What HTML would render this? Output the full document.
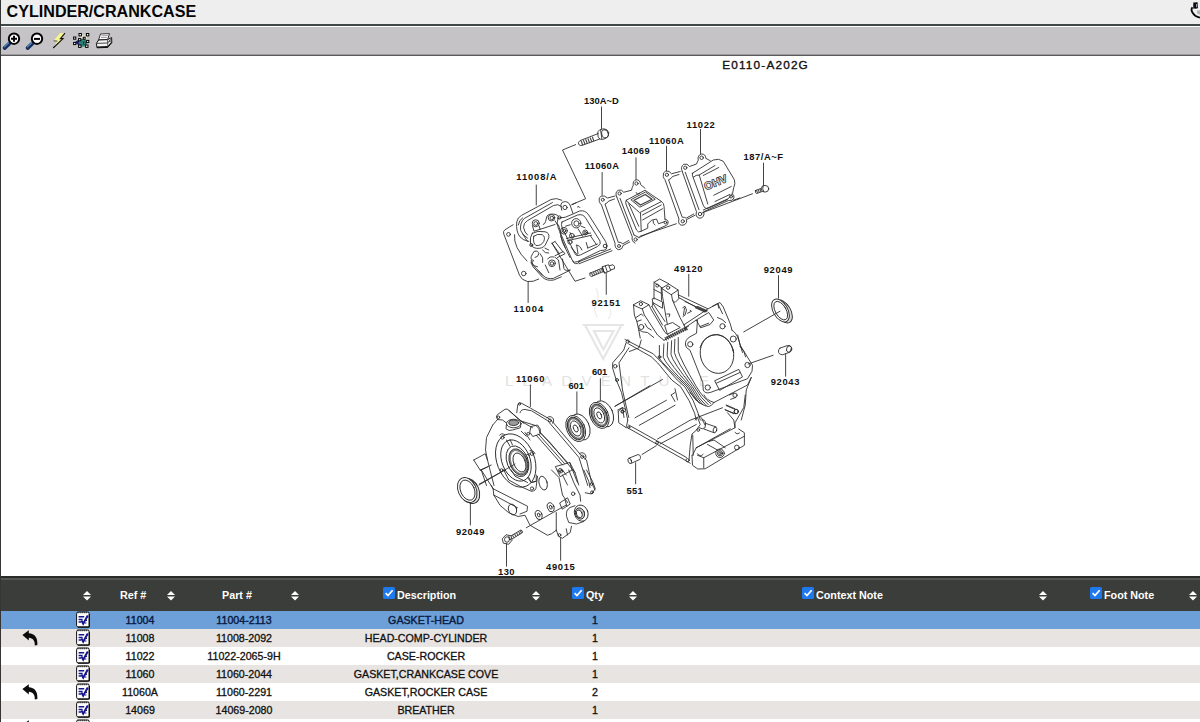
<!DOCTYPE html>
<html><head><meta charset="utf-8"><title>CYLINDER/CRANKCASE</title>
<style>
html,body{margin:0;padding:0;}
body{width:1200px;height:722px;overflow:hidden;background:#fff;position:relative;font-family:"Liberation Sans",Arial,sans-serif;color:#000;}
#title{position:absolute;left:0;top:0;width:1200px;height:24px;background:#eeeeee;}
#title span{position:absolute;left:6.6px;top:2px;font-size:16.1px;font-weight:bold;line-height:19px;white-space:nowrap;color:#050505;}
#l1{position:absolute;left:0;top:24px;width:1200px;height:2px;background:#404747;}
#tb{position:absolute;left:0;top:27px;width:1200px;height:27px;background:#c5c3c5;}
#l2{position:absolute;left:0;top:54px;width:1200px;height:2px;background:linear-gradient(#9c9a9c 0,#9c9a9c 50%,#585a5a 50%,#585a5a 100%);}
#lb{position:absolute;left:0;top:0;width:1px;height:722px;background:#353535;z-index:5;}
#th{position:absolute;left:0;top:576px;width:1200px;height:35px;background:#3b3d3b;}
#th0{position:absolute;left:0;top:576px;width:1200px;height:2px;background:#2b2b2b;}
#th1{position:absolute;left:0;top:578px;width:1200px;height:2px;background:#555755;}
.h{position:absolute;top:588px;font-size:10.75px;font-weight:bold;color:#fff;white-space:nowrap;line-height:14px;}
.row{position:absolute;left:0;width:1200px;height:18px;}
.c{position:absolute;top:0;font-size:10.67px;line-height:18px;white-space:nowrap;transform:translateX(-50%);color:#101010;-webkit-text-stroke:0.3px #101010;}
.sel .c{color:#0a1a42;-webkit-text-stroke:0.4px #0a1a42;}
.sa{position:absolute;top:591px;width:8px;height:10px;}
.cb{position:absolute;top:587px;width:12px;height:12px;}
.ic{position:absolute;top:0px;left:76px;width:14px;height:17px;}
.bk{position:absolute;top:1px;left:21.5px;width:17px;height:16px;}
#dg{position:absolute;left:0;top:0;width:1200px;height:722px;}
#dg text{font-family:"Liberation Sans",Arial,sans-serif;font-size:9.4px;fill:#111;}
</style></head><body>
<div id="title"><span>CYLINDER/CRANKCASE</span></div>
<div id="l1"></div><div id="tb"></div><div id="l2"></div><div id="lb"></div>
<svg id="dg" viewBox="0 0 1200 722" fill="none" stroke="#2a2a2a" stroke-width="0.9" stroke-linecap="round" stroke-linejoin="round">
<!-- watermark -->
<g stroke="#e6e6e6" stroke-width="2.2" stroke-linejoin="miter" stroke-linecap="butt">
<path d="M582.5 325H624M585 325L603.2 359L621.5 325M594 331H613.5L603.4 349.5Z"/>
<path d="M596 288Q599 294 597.5 301Q592 309 597.5 318M610 309Q612 314 608.5 319" stroke-width="1.4" stroke="#eeeeee"/>
</g>
<text x="505" y="385.6" textLength="204" lengthAdjust="spacing" stroke="none" style="font-size:15.2px;fill:#e2e2e2">LEADVENTURE</text>
<!-- cylinder head + head gasket; coords are 8x zoom of region origin (490,195) -->
<g transform="translate(490,195) scale(0.125)" stroke-width="7">
<!-- gasket 11004 -->
<path d="M185 238L120 278Q102 290 110 312L236 642Q252 682 300 692L345 690L390 672"/>
<circle cx="148" cy="315" r="15"/><circle cx="270" cy="628" r="18"/>
<path d="M196 318Q186 420 296 528"/>
<!-- fins arch -->
<path d="M312 372Q262 362 240 335Q205 290 214 215Q220 180 252 163L488 36Q530 18 575 42"/>
<path d="M300 345Q262 322 246 285Q236 225 274 188L500 60"/>
<path d="M300 320Q276 300 268 258Q270 222 298 206L508 84Q545 66 572 92"/>
<!-- bolt ear -->
<path d="M574 122L566 80Q570 52 602 52Q630 54 640 80L664 148"/>
<circle cx="600" cy="100" r="17"/>
<path d="M655 78L690 62M700 95Q715 85 720 100"/>
<!-- rocker box outer -->
<path d="M544 186Q600 188 668 150L716 128Q762 118 790 160L926 374Q946 410 930 432Q915 446 884 444L702 532Q672 548 658 522L545 262Q530 222 544 186Z"/>
<path d="M576 216L700 160Q745 148 766 186L880 368Q892 396 860 412L722 480Q692 492 680 470L577 262Q566 236 576 216Z"/>
<circle cx="920" cy="408" r="14"/>
<path d="M660 525Q668 556 700 548L720 530"/>
<!-- inside rocker -->
<circle cx="690" cy="226" r="37"/><circle cx="692" cy="228" r="21"/>
<circle cx="592" cy="286" r="27"/><circle cx="655" cy="326" r="19"/><circle cx="762" cy="300" r="20"/><circle cx="640" cy="376" r="17"/>
<path d="M612 348L805 304M618 366L812 322M770 380L782 424M782 424L860 392M690 400Q720 400 735 440M650 420L700 480"/>
<path d="M706 536L966 432M712 550L976 446"/>
<!-- extra density -->
<circle cx="592" cy="286" r="14"/><circle cx="762" cy="300" r="9"/>
<path d="M604 250L642 238M704 270L742 332M566 330L602 420M806 330L852 398M694 404L704 470M640 300L660 345M730 250L760 262"/>
<path d="M402 470Q432 500 422 540M442 560L470 622M382 600L420 642M262 312L300 372M226 240Q232 200 262 182"/>
<path d="M560 300L580 380L640 500M548 240L566 300"/>
<!-- bosses left face -->
<circle cx="366" cy="226" r="28"/><circle cx="366" cy="228" r="15"/>
<circle cx="492" cy="182" r="26"/><circle cx="494" cy="184" r="14"/>
<path d="M340 246L352 290L520 236M392 246L402 276M426 236Q440 232 444 214L456 168Q470 150 500 152Q530 150 548 170M520 206L540 240"/>
<circle cx="556" cy="180" r="13"/>
<!-- port boss -->
<path d="M338 306Q380 282 440 294Q478 302 470 342L442 400Q420 432 370 426Q330 420 324 384Q316 340 338 306Z"/>
<path d="M350 330Q380 305 420 318Q445 335 430 372Q410 408 368 404Q340 385 350 330Z"/>
<circle cx="330" cy="400" r="12"/>
<!-- lower body -->
<path d="M356 448Q338 470 330 492Q322 520 348 522Q330 540 345 562L425 645Q455 675 505 668L640 602"/>
<path d="M330 520Q322 545 345 575L420 658Q455 690 510 680L570 655"/>
<path d="M360 450Q385 440 390 470Q388 495 360 500M420 440Q440 470 470 465M440 425L470 440"/>
<circle cx="496" cy="546" r="27"/><circle cx="496" cy="548" r="14"/>
<path d="M462 512Q475 488 512 496M522 500L548 520L560 600M580 512L592 590Q600 610 640 600M540 500L600 470L586 452L520 486"/>
<path d="M496 386L556 470M520 372L584 456M496 386L520 372"/>
<path d="M330 540Q350 575 380 575"/>
<!-- leaders -->
<path d="M370 -80L370 80"/>
<path d="M496 386L680 690L760 664"/>
<path d="M305 692L305 860"/>
<path d="M930 625L930 795"/>
<path d="M685 -403L580 -360L765 30L655 76"/>
<!-- stud 92151 -->
<path d="M800 625L900 584L910 610L810 652Q792 650 800 625Z" fill="#fff"/>
<path d="M812 622L822 648M828 616L838 642M844 609L854 635M860 603L870 629M876 596L886 622M892 590L902 616" stroke-width="9" stroke="#555"/>
<path d="M900 574L948 558L966 604L918 624Z" fill="#fff"/>
<path d="M922 566L938 614M900 574L906 600L918 624"/>
<path d="M954 566L984 558Q1002 568 996 590L964 600"/>
</g>
<!-- breather, gaskets, OHV cover; 8x zoom of origin (590,150) -->
<g transform="translate(590,150) scale(0.125)" stroke-width="7">
<!-- gasket A -->
<circle cx="102" cy="398" r="12"/><circle cx="232" cy="768" r="12"/>
<path d="M200 368L140 384Q118 362 90 368Q66 380 74 412Q80 428 92 440L200 745Q196 790 230 798Q262 796 264 764L318 736"/>
<path d="M196 392L150 408Q140 425 120 432L226 738Q250 736 262 750L310 724"/>
<!-- breather base -->
<circle cx="372" cy="268" r="13"/><circle cx="237" cy="348" r="13"/><circle cx="603" cy="580" r="11"/><circle cx="365" cy="716" r="13"/>
<path d="M214 376Q196 340 226 322Q252 312 270 338L332 322Q336 300 346 282Q340 244 372 238Q402 240 404 276L440 306"/>
<path d="M214 376L338 694Q330 730 360 745M240 386L352 680"/>
<path d="M392 700L600 608Q628 600 626 575Q618 552 598 552"/>
<path d="M352 680L392 700M400 690L690 590"/>
<!-- breather box -->
<path d="M290 402L440 322L572 412L400 500Z"/>
<path d="M330 396L444 336L522 394L402 456Z"/>
<path d="M352 402L442 356L496 394L404 440Z" stroke-width="11" stroke="#444"/>
<path d="M290 402Q280 420 290 440L372 640Q385 665 410 650L404 505"/>
<path d="M572 412Q592 425 592 450L600 552"/>
<path d="M410 650L462 625L462 592L492 562L532 552L548 590L600 572"/>
<path d="M505 565Q500 590 520 600"/>
<path d="M310 430L390 610M420 520L570 440M420 560L580 470"/>
<path d="M370 340L380 355L398 345"/>
<!-- gasket B -->
<circle cx="615" cy="198" r="13"/><circle cx="742" cy="570" r="13"/>
<path d="M722 172L652 190Q636 164 606 168Q580 178 586 212Q590 228 600 238L712 552Q700 590 730 602Q762 606 772 580Q776 566 770 558L840 522"/>
<path d="M712 196L660 212Q650 232 628 238L738 538Q756 536 770 545L830 512"/>
<!-- OHV cover base -->
<circle cx="893" cy="62" r="14"/><circle cx="762" cy="142" r="13"/><circle cx="880" cy="512" r="14"/><circle cx="1128" cy="372" r="12"/>
<path d="M738 172Q720 136 750 114Q780 106 796 132L852 112Q858 96 866 82Q858 40 892 32Q926 32 926 66L962 86"/>
<path d="M738 172L852 494Q840 535 872 545Q905 548 912 514Q912 502 908 494L1108 404Q1140 410 1152 384Q1156 358 1136 348"/>
<path d="M762 178L872 478M906 480L1100 392"/>
<!-- dome -->
<path d="M820 186L986 80Q1030 64 1066 90L1154 236Q1166 270 1150 300L1140 350L1100 396L946 466Q916 472 906 442L826 222Q814 200 820 186Z"/>
<path d="M826 218Q850 196 874 200L942 432M874 200L1000 124"/>
<path d="M906 204L1030 140M990 362L1130 292M1000 412L1118 356"/>
<path d="M1145 402L1200 384"/>
<text x="0" y="0" transform="translate(928,322) rotate(-22)" style="font-family:'Liberation Sans',sans-serif;font-weight:bold;font-size:84px;fill:#c8c8c8;stroke:#111;stroke-width:9px;paint-order:stroke fill" textLength="190" lengthAdjust="spacingAndGlyphs">OHV</text>
<!-- label leaders -->
<path d="M97 180L97 362"/>
<path d="M368 62L368 236"/>
<path d="M612 -30L612 166"/>
<path d="M884 -165L884 30"/>
</g>
<!-- bolt 130A~D; 8x zoom origin (560,90) -->
<g transform="translate(560,90) scale(0.125)" stroke-width="7">
<path d="M332 135L332 312"/>
<path d="M302 350L160 405Q140 418 150 436Q158 448 178 442L318 392"/>
<path d="M170 410L182 440M188 403L200 434M206 396L218 428M224 390L236 421M242 383L254 414M260 377L270 408" stroke-width="9" stroke="#444"/>
<path d="M302 350Q298 330 318 318L350 310Q380 312 390 340Q392 370 370 385L338 396Q318 392 318 392Q300 380 302 350Z" fill="#fff"/>
<ellipse cx="360" cy="350" rx="26" ry="33" transform="rotate(-15 360 350)"/>
<path d="M325 322L335 390"/>
</g>
<!-- bolt 187; 8x zoom origin (690,130) -->
<g transform="translate(690,130) scale(0.125)" stroke-width="7">
<path d="M588 265L588 445"/>
<path d="M500 510L100 662"/>
<path d="M524 484L574 466L582 490L532 508Q518 506 524 484Z" fill="#fff"/><path d="M532 482L540 504M546 477L554 499M560 472L568 494" stroke-width="9" stroke="#555"/>
<ellipse cx="600" cy="470" rx="30" ry="27" fill="#fff"/>
<path d="M585 448Q575 470 590 494"/>
</g>
<!-- crankcase top; 8x zoom origin (610,265) -->
<g transform="translate(610,265) scale(0.125)" stroke-width="7">
<path d="M630 75L630 250"/>
<!-- T1 -->
<path d="M352 272L352 138L398 112L470 150M352 196L410 226M410 182L412 282M352 138L415 182"/>
<circle cx="378" cy="165" r="12"/>
<!-- T2 -->
<path d="M415 185L470 152L545 200L492 236Z"/><circle cx="465" cy="182" r="13"/>
<path d="M415 185L420 250L440 370L458 470M492 236L500 282L560 420L592 480M545 200L550 270L520 300L500 282"/>
<path d="M455 392L480 392L472 415"/>
<!-- T3 -->
<path d="M188 318L245 286L312 318L258 350Z"/><circle cx="247" cy="312" r="13"/>
<path d="M188 318L195 400L215 452L230 520L242 585M258 350L275 400L380 560L432 602M312 318L326 350L440 540L466 560"/>
<path d="M208 420L250 392L266 406M280 470L300 502L330 520M215 452L250 440"/>
<circle cx="250" cy="496" r="20"/>
<path d="M230 520Q260 540 300 540L350 580"/>
<!-- block between -->
<path d="M340 270L352 264L420 296L420 346L345 302ZM340 302L440 452M336 332L420 480M345 302L336 332"/>
<path d="M440 482L500 460L562 500L462 552Z"/>
<!-- rail -->
<path d="M545 238L782 350M552 262L745 368M600 292L742 360"/>
<path d="M690 336L770 372M700 332L778 366M684 342L760 376" stroke-width="10" stroke="#444"/>
<path d="M582 342L600 330L612 360L600 400L584 412M596 345L588 400M620 386L652 370L640 362"/>
<!-- cylinder top edge & flange notch -->
<path d="M592 478L782 352L880 300L906 336L962 470L976 522"/>
<path d="M600 502L690 440L790 380L830 440L800 476L725 502L690 440"/>
<path d="M720 492L790 465"/>
<path d="M820 330L862 308L900 390M862 308L870 345"/>
<!-- fin hatch -->
<path d="M442 592L620 502" stroke-width="32" stroke="#555" stroke-linecap="butt" stroke-dasharray="9 8"/>
<path d="M432 602L612 512M452 580L628 490"/>
<path d="M592 478L600 502L612 520"/>
<!-- flange top in this view -->
<path d="M604 640Q596 600 640 574L692 546L700 442"/>
<circle cx="642" cy="634" r="21"/><circle cx="986" cy="592" r="24"/><circle cx="900" cy="490" r="21"/>
<path d="M720 660Q750 560 860 556Q960 570 990 700"/>
<path d="M976 522Q1010 540 1030 600L1060 700"/>
<path d="M860 420Q900 430 925 460"/>
<!-- fins upper -->
<!-- left face top -->
<path d="M155 692L232 662L250 600"/>
</g>
<!-- crankcase middle; 8x zoom origin (610,330) -->
<g transform="translate(610,330) scale(0.125)" stroke-width="7">
<!-- flange -->
<path d="M604 120Q600 140 640 162L742 420L746 480Q760 512 802 500L1100 390L1136 330L1140 282L1040 120L1022 40"/>
<path d="M752 520Q770 560 832 580L1100 440L1130 380"/>
<circle cx="782" cy="460" r="21"/><circle cx="1100" cy="280" r="21"/>
<ellipse cx="856" cy="192" rx="133" ry="156" transform="rotate(-14 856 192)"/>
<path d="M840 405L1030 315L1060 375L880 482ZM852 425L1040 340"/>
<path d="M1130 380L1090 480L1082 600L1050 720"/>
<path d="M1040 130Q1080 170 1085 215"/>
<!-- fins -->
<path d="M546 60L546 170Q562 235 692 455Q742 540 806 588"/>
<path d="M519 74L515 180Q530 245 676 455Q728 548 786 597"/>
<path d="M493 86L488 196Q502 258 660 455Q710 552 770 606"/>
<path d="M462 98L457 208Q474 268 645 455Q694 546 742 598"/>
<path d="M431 111L426 218Q446 276 630 455Q674 536 716 586"/>
<path d="M395 124L395 228Q424 272 616 455Q654 520 692 566"/>
<path d="M640 500L705 576Q760 612 790 612Q812 610 832 580"/>
<!-- face right (diagonal) edge -->
<path d="M120 76L345 190L415 262L538 400L599 455L666 566L705 666L722 720M150 112L330 214L382 264L494 400L566 455L633 566L677 666L690 720"/>
<circle cx="142" cy="92" r="13"/><circle cx="396" cy="216" r="11"/>
<!-- face left edge -->
<path d="M128 104L110 160L22 262L20 302L50 400L92 500L120 620L142 720M152 142L72 262L100 480L150 700"/>
<circle cx="42" cy="290" r="14"/><circle cx="56" cy="400" r="12"/>
<!-- inner lines -->
<path d="M40 610L420 396"/>
<path d="M490 520L520 572M520 470L540 560M490 520L520 500"/>
<path d="M62 640L100 620L112 700"/><circle cx="100" cy="652" r="10"/>
<!-- studs -->
<circle cx="1000" cy="522" r="17"/><path d="M990 505L955 520M1005 540L965 555"/>
<circle cx="1010" cy="652" r="17"/><path d="M1000 635L930 605M1005 670L922 640"/>
</g>
<!-- crankcase bottom; 8x zoom origin (610,395) -->
<g transform="translate(610,395) scale(0.125)" stroke-width="7">
<path d="M142 200L132 250M66 130L100 100L128 118M66 130L70 222L130 262"/>
<circle cx="100" cy="132" r="13"/>
<path d="M130 256L372 392L602 522L642 546M150 240L382 370L612 500"/>
<circle cx="150" cy="258" r="9"/><circle cx="376" cy="382" r="11"/><circle cx="620" cy="522" r="13"/>
<path d="M682 200L700 180L722 236L690 282L656 312L642 400L632 520M704 160L732 182L760 240M662 322L666 482"/>
<circle cx="706" cy="280" r="11"/>
<path d="M735 200Q760 190 765 230L760 262Q740 280 715 262"/>
<path d="M762 226L850 256M752 272L832 302"/><ellipse cx="840" cy="279" rx="14" ry="22" transform="rotate(15 840 279)"/>
<!-- base right -->
<path d="M656 482L660 562L702 592L762 590L1075 402L1075 302L1030 272"/>
<path d="M690 422L1000 262L990 200L940 142M690 422L660 482M700 482L750 502L750 582M750 502L1075 330"/>
<path d="M790 372L832 360L922 422M780 396L860 440"/>
<circle cx="880" cy="466" r="34"/><circle cx="880" cy="466" r="21"/><circle cx="880" cy="466" r="10"/>
<circle cx="1015" cy="420" r="19"/>
<path d="M700 470Q722 500 745 475M1000 300Q1015 322 1035 305"/>
<!-- inner lines -->
<path d="M200 182L452 42M235 242L520 82M380 352L640 202L900 102M400 392L690 236M690 422L962 270"/>
<!-- right body -->
<path d="M1082 0L1070 100L1000 222L1000 262"/>
<path d="M930 80L1000 110M920 116L990 150"/><circle cx="1010" cy="132" r="17"/>
<!-- pin 551 -->
<path d="M150 506L226 476Q246 480 244 500Q244 512 238 516L166 548"/>
<ellipse cx="158" cy="527" rx="13" ry="22" transform="rotate(-20 158 527)" fill="#fff"/>
<path d="M205 542L205 710"/>
<path d="M256 476L370 406"/>
</g>
<!-- seal 92049 right; 8x zoom origin (700,260) -->
<g transform="translate(700,260) scale(0.125)" stroke-width="7">
<path d="M628 125L628 305"/>
<ellipse cx="668" cy="412" rx="58" ry="100" transform="rotate(-30 668 412)" fill="#ddd" stroke-width="7.5"/>
<ellipse cx="644" cy="404" rx="58" ry="100" transform="rotate(-30 644 404)" fill="#fff" stroke-width="7.5"/>
<ellipse cx="646" cy="405" rx="43" ry="82" transform="rotate(-30 646 405)" stroke-width="7"/>
<path d="M350 575L640 410"/>
</g>
<!-- pin 92043; 8x zoom origin (700,320) -->
<g transform="translate(700,320) scale(0.125)" stroke-width="7">
<path d="M685 270L685 450"/>
<path d="M385 352L585 282"/>
<path d="M640 225L700 204Q735 205 735 235Q730 255 712 260L660 278Q625 275 628 248Q630 232 640 225Z" fill="#fff"/>
<ellipse cx="712" cy="232" rx="19" ry="27" transform="rotate(15 712 232)"/>
</g>
<!-- bearings + 11060 leader; 8x zoom origin (500,360) -->
<g transform="translate(500,360) scale(0.125)" stroke-width="7">
<path d="M243 200L243 372"/>
<path d="M615 255L615 430"/>
<path d="M803 150L803 326"/>
<path d="M920 370L1200 205"/>
<g>
<ellipse cx="642" cy="536" rx="72" ry="110" transform="rotate(-24 642 536)" fill="#fff"/>
<ellipse cx="606" cy="548" rx="72" ry="110" transform="rotate(-24 606 548)" fill="#fff"/>
<ellipse cx="606" cy="548" rx="52" ry="86" transform="rotate(-24 606 548)" stroke-width="17" stroke="#777" stroke-dasharray="13 9"/>
<ellipse cx="606" cy="548" rx="60" ry="96" transform="rotate(-24 606 548)"/>
<ellipse cx="606" cy="548" rx="38" ry="64" transform="rotate(-24 606 548)"/>
<ellipse cx="606" cy="548" rx="17" ry="30" transform="rotate(-24 606 548)"/>
</g>
<g transform="translate(188,-105)">
<ellipse cx="642" cy="536" rx="72" ry="110" transform="rotate(-24 642 536)" fill="#fff"/>
<ellipse cx="606" cy="548" rx="72" ry="110" transform="rotate(-24 606 548)" fill="#fff"/>
<ellipse cx="606" cy="548" rx="52" ry="86" transform="rotate(-24 606 548)" stroke-width="17" stroke="#777" stroke-dasharray="13 9"/>
<ellipse cx="606" cy="548" rx="60" ry="96" transform="rotate(-24 606 548)"/>
<ellipse cx="606" cy="548" rx="38" ry="64" transform="rotate(-24 606 548)"/>
<ellipse cx="606" cy="548" rx="17" ry="30" transform="rotate(-24 606 548)"/>
</g>
</g>
<!-- cover upper; 8x zoom origin (450,395) -->
<g transform="translate(450,395) scale(0.125)" stroke-width="7">
<!-- gasket 11060 -->
<circle cx="556" cy="72" r="9"/>
<path d="M534 142L542 80Q548 55 572 66L642 104L792 190L822 216L1050 484L1092 520L1132 700L1160 760"/>
<path d="M560 142Q570 112 600 116L652 126L782 206L1032 500L1102 724"/>
<circle cx="800" cy="204" r="12"/><circle cx="1058" cy="494" r="13"/><path d="M776 182Q800 160 826 188Q836 210 822 226M1034 470Q1060 450 1084 478Q1094 500 1082 516"/>
<!-- cover top -->
<path d="M380 196Q362 176 378 158L440 114Q458 106 472 124L562 206L690 246Q716 262 720 300"/>
<circle cx="388" cy="178" r="10"/>
<path d="M380 196L420 200L452 224M380 196L342 240"/>
<ellipse cx="510" cy="228" rx="58" ry="34"/>
<ellipse cx="510" cy="222" rx="40" ry="22" fill="#999"/>
<path d="M452 232L448 270Q470 292 500 280L562 262L568 232"/>
<path d="M472 124L590 226M562 206L660 262"/>
<!-- left outline -->
<path d="M342 240L292 340L284 440L300 520L330 640L352 724"/>
<!-- bearing boss -->
<ellipse cx="526" cy="524" rx="150" ry="222" transform="rotate(-22 526 524)"/>
<ellipse cx="528" cy="524" rx="112" ry="172" transform="rotate(-22 528 524)"/>
<ellipse cx="540" cy="530" rx="84" ry="128" transform="rotate(-22 540 530)"/>
<ellipse cx="548" cy="536" rx="62" ry="100" transform="rotate(-22 548 536)" stroke-width="14" stroke="#888"/>
<ellipse cx="548" cy="536" rx="70" ry="110" transform="rotate(-22 548 536)"/>
<ellipse cx="556" cy="540" rx="46" ry="80" transform="rotate(-22 556 540)"/>
<circle cx="420" cy="340" r="13"/><circle cx="655" cy="470" r="13"/><circle cx="412" cy="600" r="11"/>
<path d="M396 322Q410 300 440 318M640 445Q670 440 680 470M452 360L480 410M480 356L500 400M610 480L640 470"/>
<path d="M630 660L650 700L690 690L690 640"/>
<!-- right part -->
<path d="M650 252L700 240L722 272L722 312L662 332L640 300Z"/><circle cx="626" cy="310" r="11"/>
<path d="M690 322L900 560M706 312L916 548M722 300L940 540"/>
<path d="M846 572L958 540L976 600L884 652ZM958 540L1000 620L1030 720M900 640L940 720"/>
<circle cx="882" cy="600" r="13"/>
<path d="M720 300L800 380L1000 620"/>
<path d="M600 300L640 360M570 290L610 330"/>
<!-- left bracket -->
<path d="M190 520L282 470L300 520M190 520L242 602L300 576M250 600L292 724M242 602L330 560"/>
<!-- seal leader -->
<path d="M232 720L520 552"/>
</g>
<!-- cover lower; 8x zoom origin (450,470) -->
<g transform="translate(450,470) scale(0.125)" stroke-width="7">
<!-- seal left -->
<path d="M163 265L163 440"/>
<ellipse cx="160" cy="168" rx="72" ry="104" transform="rotate(-24 160 168)" fill="#ddd" stroke-width="7.5"/>
<ellipse cx="138" cy="160" rx="72" ry="104" transform="rotate(-24 138 160)" fill="#fff" stroke-width="7.5"/>
<ellipse cx="140" cy="161" rx="55" ry="85" transform="rotate(-24 140 161)" stroke-width="7"/>
<!-- cover lower outline -->
<path d="M250 0L345 150L350 200L400 282L470 342L545 372L600 362L640 442L780 522L812 510L850 482"/>
<path d="M345 150L620 290L616 330L560 352M350 200L540 302M330 124L345 150"/>
<ellipse cx="500" cy="316" rx="32" ry="44" transform="rotate(-20 500 316)"/>
<path d="M430 0L470 80L560 130L650 170Q690 170 690 130L700 50M490 0L520 50L620 100"/>
<circle cx="656" cy="148" r="13"/>
<path d="M620 60L650 100L690 90"/>
<ellipse cx="745" cy="105" rx="32" ry="56" transform="rotate(-15 745 105)"/>
<ellipse cx="806" cy="298" rx="26" ry="38" transform="rotate(-20 806 298)"/><ellipse cx="806" cy="298" rx="10" ry="16" transform="rotate(-20 806 298)"/>
<ellipse cx="710" cy="360" rx="26" ry="38" transform="rotate(-20 710 360)"/><ellipse cx="710" cy="360" rx="10" ry="16" transform="rotate(-20 710 360)"/>
<path d="M812 0L872 60L900 200L942 262M950 0L990 100L1040 200L1045 250M980 0L1020 100"/>
<path d="M900 0L930 40M860 0L880 30"/><circle cx="890" cy="10" r="12"/>
<path d="M1092 0L1140 90L1162 150L1132 192L1082 182M1070 0L1110 90L1120 140"/>
<circle cx="1132" cy="112" r="11"/><circle cx="1136" cy="178" r="11"/>
<circle cx="985" cy="190" r="14"/>
<!-- governor boss -->
<path d="M1000 286L960 300Q925 320 932 370L950 420L1012 432L1070 412"/>
<ellipse cx="1050" cy="345" rx="54" ry="66" transform="rotate(-20 1050 345)"/>
<ellipse cx="1040" cy="348" rx="36" ry="46" transform="rotate(-20 1040 348)" fill="#ccc"/>
<ellipse cx="1034" cy="350" rx="22" ry="32" transform="rotate(-20 1034 350)" fill="#fff"/>
<path d="M880 262L940 222L962 272L900 312ZM920 240L935 290"/>
<path d="M850 482L870 532L900 546L962 500L972 450M850 340L850 482M930 470L940 520"/>
<circle cx="876" cy="520" r="11"/>
<!-- leaders -->
<path d="M885 545L885 722"/>
<path d="M610 462L930 280"/>
<path d="M235 112L440 0"/>
<!-- bolt 130 -->
<path d="M484 530L566 480Q582 484 580 500L496 552Z" fill="#fff"/><path d="M500 522L512 542M516 512L528 532M532 502L544 522M548 492L560 512M562 484L572 504" stroke-width="9" stroke="#555"/>
<path d="M420 548L448 518L488 526L496 562L470 594L430 586Z" fill="#fff"/>
<ellipse cx="456" cy="556" rx="20" ry="22"/><path d="M470 530L486 560"/>
<path d="M452 590L452 770"/>
</g>
<!-- labels -->
<g stroke="none" style="font-weight:bold">
<text x="584.10" y="103.75" textLength="34.65" lengthAdjust="spacing">130A~D</text>
<text x="686.60" y="127.50" textLength="28.15" lengthAdjust="spacing">11022</text>
<text x="649.10" y="144.00" textLength="34.65" lengthAdjust="spacing">11060A</text>
<text x="621.80" y="154.00" textLength="27.95" lengthAdjust="spacing">14069</text>
<text x="584.70" y="169.00" textLength="34.30" lengthAdjust="spacing">11060A</text>
<text x="516.30" y="180.40" textLength="40.20" lengthAdjust="spacing">11008/A</text>
<text x="743.45" y="160.00" textLength="39.65" lengthAdjust="spacing">187/A~F</text>
<text x="513.60" y="312.40" textLength="29.60" lengthAdjust="spacing">11004</text>
<text x="591.60" y="306.20" textLength="28.70" lengthAdjust="spacing">92151</text>
<text x="674.10" y="271.50" textLength="28.40" lengthAdjust="spacing">49120</text>
<text x="763.70" y="272.50" textLength="28.80" lengthAdjust="spacing">92049</text>
<text x="770.70" y="385.25" textLength="28.70" lengthAdjust="spacing">92043</text>
<text x="591.95" y="375.25" textLength="15.30" lengthAdjust="spacing">601</text>
<text x="568.45" y="388.75" textLength="15.55" lengthAdjust="spacing">601</text>
<text x="515.95" y="381.90" textLength="28.45" lengthAdjust="spacing">11060</text>
<text x="626.40" y="493.50" textLength="16.35" lengthAdjust="spacing">551</text>
<text x="455.95" y="534.60" textLength="28.45" lengthAdjust="spacing">92049</text>
<text x="498.00" y="574.80" textLength="16.50" lengthAdjust="spacing">130</text>
<text x="546.00" y="570.00" textLength="28.80" lengthAdjust="spacing">49015</text>
</g>
<text x="722.2" y="68.8" textLength="85.6" lengthAdjust="spacing" style="font-size:11.8px;fill:#111;stroke:#111;stroke-width:0.35px">E0110-A202G</text>
</svg>
<svg style="position:absolute;left:0;top:26px;width:120px;height:30px" viewBox="0 26 120 30">
<!-- zoom in -->
<path d="M9.8 43.2L4.6 48" stroke="#15305c" stroke-width="3.8" stroke-linecap="round"/>
<path d="M9 42.6L4.4 46.8" stroke="#5f8fd0" stroke-width="1.1" stroke-linecap="round"/>
<circle cx="14" cy="38.7" r="5.2" fill="#fff" stroke="#050505" stroke-width="2"/>
<path d="M11 38.7H17M14 35.7V41.7" stroke="#000" stroke-width="1.9"/>
<!-- zoom out -->
<path d="M32.8 43.2L27.6 48" stroke="#15305c" stroke-width="3.8" stroke-linecap="round"/>
<path d="M32 42.6L27.4 46.8" stroke="#5f8fd0" stroke-width="1.1" stroke-linecap="round"/>
<circle cx="37" cy="38.7" r="5.2" fill="#fff" stroke="#050505" stroke-width="2"/>
<path d="M34 38.9H40" stroke="#000" stroke-width="2"/>
<!-- lightning -->
<path d="M60.2 33L65 33.2L60.4 38.6L63 38.6L53.2 48L57.4 41L53.6 40.8Z" fill="#f6f690" stroke="none"/>
<path d="M65 33.2L60.4 38.6L63 38.6L53.2 48" fill="none" stroke="#111" stroke-width="1.1"/>
<path d="M57.4 41L53.6 40.8" stroke="#333" stroke-width="0.8"/>
<!-- select icon -->
<path d="M74.2 42.6L80.4 38.6L81.4 46.4Z" fill="#1c1c66"/>
<circle cx="82.8" cy="42.8" r="4" fill="#2a8578"/>
<path d="M80.5 35.5Q84 34.5 87 36.5L86.5 39.5Q84 37.5 81 38.5Z" fill="#f4f0d0"/>
<g fill="#fff" stroke="#000" stroke-width="1">
<rect x="79" y="33.5" width="2.4" height="2.4"/><rect x="86.4" y="33.5" width="2.4" height="2.4"/>
<rect x="73.6" y="37" width="2.2" height="2.2"/><rect x="73.6" y="42.4" width="2.2" height="2.2"/>
<rect x="78.6" y="38.6" width="2.2" height="2.2"/><rect x="86.6" y="40.4" width="2.2" height="2.2"/>
<rect x="78.6" y="45" width="2.4" height="2.4"/><rect x="85.6" y="45" width="2.4" height="2.4"/>
<rect x="83.2" y="37.2" width="2" height="2"/><rect x="83.4" y="42.2" width="1.8" height="1.8" stroke="#0a3c36" fill="#bfe"/>
</g>
<!-- printer -->
<path d="M100.5 34L109.5 33.6L107.6 39.6L98.6 40Z" fill="#fff" stroke="#222" stroke-width="0.9"/>
<path d="M101.5 35.8L107.8 35.5M101 37.6L107.2 37.3" stroke="#888" stroke-width="0.8"/>
<path d="M98.6 40L107.6 39.6L111.6 37.6L111.8 42.6L107.8 47.4L97 47.8L96.4 43.4Z" fill="#f2f2f2" stroke="#111" stroke-width="1"/>
<path d="M96.6 43.4L107.6 43L111.6 38.6" fill="none" stroke="#333" stroke-width="0.9"/>
<path d="M97 46.4L107.8 46L111.6 41.6L111.8 42.8L107.8 47.6L97 48Z" fill="#111"/>
<path d="M107.6 39.8L107.8 47" stroke="#333" stroke-width="0.8"/>
<circle cx="109.8" cy="41.2" r="0.9" fill="#444"/>
</svg>
<svg style="position:absolute;left:1186px;top:0;width:14px;height:22px" viewBox="1186 0 14 22">
<path d="M1193.3 2.4L1197.6 2.2L1198 8.6L1193.2 9Z" fill="#0b0b14"/>
<path d="M1196.6 4L1196.6 7.2" stroke="#cfd3e8" stroke-width="0.8"/>
<path d="M1192.4 7.2Q1190.6 9.6 1192.6 12.8Q1195 16.8 1200 17.6" fill="none" stroke="#060606" stroke-width="1.8"/>
<path d="M1193.6 8.8Q1196 10.4 1198.4 8.6" fill="none" stroke="#fff" stroke-width="0.8"/>
<path d="M1197 10.4Q1199 10 1200 10.6L1200 14.6Q1198 14.6 1197 13.2Z" fill="#b5b5b5"/>
</svg>
<div id="th"></div><div id="th0"></div><div id="th1"></div>
<svg class="sa" style="left:83px" viewBox="0 0 8 10"><path d="M4 0L8 4H0Z M0 5.5H8L4 9.5Z" fill="#fff"/></svg>
<svg class="sa" style="left:167px" viewBox="0 0 8 10"><path d="M4 0L8 4H0Z M0 5.5H8L4 9.5Z" fill="#fff"/></svg>
<svg class="sa" style="left:291px" viewBox="0 0 8 10"><path d="M4 0L8 4H0Z M0 5.5H8L4 9.5Z" fill="#fff"/></svg>
<svg class="sa" style="left:531.5px" viewBox="0 0 8 10"><path d="M4 0L8 4H0Z M0 5.5H8L4 9.5Z" fill="#fff"/></svg>
<svg class="sa" style="left:628.5px" viewBox="0 0 8 10"><path d="M4 0L8 4H0Z M0 5.5H8L4 9.5Z" fill="#fff"/></svg>
<svg class="sa" style="left:1039px" viewBox="0 0 8 10"><path d="M4 0L8 4H0Z M0 5.5H8L4 9.5Z" fill="#fff"/></svg>
<svg class="sa" style="left:1188.5px" viewBox="0 0 8 10"><path d="M4 0L8 4H0Z M0 5.5H8L4 9.5Z" fill="#fff"/></svg>
<svg class="cb" style="left:383px" viewBox="0 0 12 12"><rect x="0" y="0" width="12" height="12" rx="1.5" fill="#1e78ee"/><path d="M2.6 6.2L5 8.6L9.6 3.2" stroke="#fff" stroke-width="1.7" fill="none"/></svg>
<svg class="cb" style="left:572px" viewBox="0 0 12 12"><rect x="0" y="0" width="12" height="12" rx="1.5" fill="#1e78ee"/><path d="M2.6 6.2L5 8.6L9.6 3.2" stroke="#fff" stroke-width="1.7" fill="none"/></svg>
<svg class="cb" style="left:802px" viewBox="0 0 12 12"><rect x="0" y="0" width="12" height="12" rx="1.5" fill="#1e78ee"/><path d="M2.6 6.2L5 8.6L9.6 3.2" stroke="#fff" stroke-width="1.7" fill="none"/></svg>
<svg class="cb" style="left:1090px" viewBox="0 0 12 12"><rect x="0" y="0" width="12" height="12" rx="1.5" fill="#1e78ee"/><path d="M2.6 6.2L5 8.6L9.6 3.2" stroke="#fff" stroke-width="1.7" fill="none"/></svg>
<span class="h" style="left:120px">Ref #</span>
<span class="h" style="left:222px">Part #</span>
<span class="h" style="left:397px">Description</span>
<span class="h" style="left:586px">Qty</span>
<span class="h" style="left:816px">Context Note</span>
<span class="h" style="left:1104px">Foot Note</span>
<div class="row sel" style="top:611px;background:#6d9fd8"><svg class="ic" viewBox="0 0 14 17"><rect x="0.6" y="1" width="12.6" height="15" rx="1.6" fill="#fff" stroke="#111" stroke-width="1"/><path d="M13.4 3V15.2Q13.4 16.2 12.2 16.2H2" stroke="#111" stroke-width="1.3" fill="none"/><path d="M1.6 1.4H12.6" stroke="#222" stroke-width="1.5" stroke-dasharray="1 1.05"/><path d="M2.6 5.8H8.2M2.6 8.4H6.6M2.6 11H5" stroke="#16168c" stroke-width="1.5"/><path d="M5.4 9.6L7.2 12.8L11.8 4.6" stroke="#16168c" stroke-width="2" fill="none"/><path d="M9.4 9.4H11M8.6 12H10.4" stroke="#16168c" stroke-width="1.1"/></svg><span class="c" style="left:140px">11004</span><span class="c" style="left:244px">11004-2113</span><span class="c" style="left:426px">GASKET-HEAD</span><span class="c" style="left:595px">1</span></div>
<div class="row" style="top:629px;background:#e8e4e1"><svg class="bk" viewBox="0 0 17 16"><path d="M0.4 5L6.8 0.2V3.2C12.6 3.4 15.9 7.6 15.4 15L12.8 15.4C13 10.8 11 8 6.8 7.7V10.6Z" fill="#0c0c0c"/></svg><svg class="ic" viewBox="0 0 14 17"><rect x="0.6" y="1" width="12.6" height="15" rx="1.6" fill="#fff" stroke="#111" stroke-width="1"/><path d="M13.4 3V15.2Q13.4 16.2 12.2 16.2H2" stroke="#111" stroke-width="1.3" fill="none"/><path d="M1.6 1.4H12.6" stroke="#222" stroke-width="1.5" stroke-dasharray="1 1.05"/><path d="M2.6 5.8H8.2M2.6 8.4H6.6M2.6 11H5" stroke="#16168c" stroke-width="1.5"/><path d="M5.4 9.6L7.2 12.8L11.8 4.6" stroke="#16168c" stroke-width="2" fill="none"/><path d="M9.4 9.4H11M8.6 12H10.4" stroke="#16168c" stroke-width="1.1"/></svg><span class="c" style="left:140px">11008</span><span class="c" style="left:244px">11008-2092</span><span class="c" style="left:426px">HEAD-COMP-CYLINDER</span><span class="c" style="left:595px">1</span></div>
<div class="row" style="top:647px;background:#ffffff"><svg class="ic" viewBox="0 0 14 17"><rect x="0.6" y="1" width="12.6" height="15" rx="1.6" fill="#fff" stroke="#111" stroke-width="1"/><path d="M13.4 3V15.2Q13.4 16.2 12.2 16.2H2" stroke="#111" stroke-width="1.3" fill="none"/><path d="M1.6 1.4H12.6" stroke="#222" stroke-width="1.5" stroke-dasharray="1 1.05"/><path d="M2.6 5.8H8.2M2.6 8.4H6.6M2.6 11H5" stroke="#16168c" stroke-width="1.5"/><path d="M5.4 9.6L7.2 12.8L11.8 4.6" stroke="#16168c" stroke-width="2" fill="none"/><path d="M9.4 9.4H11M8.6 12H10.4" stroke="#16168c" stroke-width="1.1"/></svg><span class="c" style="left:140px">11022</span><span class="c" style="left:244px">11022-2065-9H</span><span class="c" style="left:426px">CASE-ROCKER</span><span class="c" style="left:595px">1</span></div>
<div class="row" style="top:665px;background:#e8e4e1"><svg class="ic" viewBox="0 0 14 17"><rect x="0.6" y="1" width="12.6" height="15" rx="1.6" fill="#fff" stroke="#111" stroke-width="1"/><path d="M13.4 3V15.2Q13.4 16.2 12.2 16.2H2" stroke="#111" stroke-width="1.3" fill="none"/><path d="M1.6 1.4H12.6" stroke="#222" stroke-width="1.5" stroke-dasharray="1 1.05"/><path d="M2.6 5.8H8.2M2.6 8.4H6.6M2.6 11H5" stroke="#16168c" stroke-width="1.5"/><path d="M5.4 9.6L7.2 12.8L11.8 4.6" stroke="#16168c" stroke-width="2" fill="none"/><path d="M9.4 9.4H11M8.6 12H10.4" stroke="#16168c" stroke-width="1.1"/></svg><span class="c" style="left:140px">11060</span><span class="c" style="left:244px">11060-2044</span><span class="c" style="left:426px">GASKET,CRANKCASE COVE</span><span class="c" style="left:595px">1</span></div>
<div class="row" style="top:683px;background:#ffffff"><svg class="bk" viewBox="0 0 17 16"><path d="M0.4 5L6.8 0.2V3.2C12.6 3.4 15.9 7.6 15.4 15L12.8 15.4C13 10.8 11 8 6.8 7.7V10.6Z" fill="#0c0c0c"/></svg><svg class="ic" viewBox="0 0 14 17"><rect x="0.6" y="1" width="12.6" height="15" rx="1.6" fill="#fff" stroke="#111" stroke-width="1"/><path d="M13.4 3V15.2Q13.4 16.2 12.2 16.2H2" stroke="#111" stroke-width="1.3" fill="none"/><path d="M1.6 1.4H12.6" stroke="#222" stroke-width="1.5" stroke-dasharray="1 1.05"/><path d="M2.6 5.8H8.2M2.6 8.4H6.6M2.6 11H5" stroke="#16168c" stroke-width="1.5"/><path d="M5.4 9.6L7.2 12.8L11.8 4.6" stroke="#16168c" stroke-width="2" fill="none"/><path d="M9.4 9.4H11M8.6 12H10.4" stroke="#16168c" stroke-width="1.1"/></svg><span class="c" style="left:140px">11060A</span><span class="c" style="left:244px">11060-2291</span><span class="c" style="left:426px">GASKET,ROCKER CASE</span><span class="c" style="left:595px">2</span></div>
<div class="row" style="top:701px;background:#e8e4e1"><svg class="ic" viewBox="0 0 14 17"><rect x="0.6" y="1" width="12.6" height="15" rx="1.6" fill="#fff" stroke="#111" stroke-width="1"/><path d="M13.4 3V15.2Q13.4 16.2 12.2 16.2H2" stroke="#111" stroke-width="1.3" fill="none"/><path d="M1.6 1.4H12.6" stroke="#222" stroke-width="1.5" stroke-dasharray="1 1.05"/><path d="M2.6 5.8H8.2M2.6 8.4H6.6M2.6 11H5" stroke="#16168c" stroke-width="1.5"/><path d="M5.4 9.6L7.2 12.8L11.8 4.6" stroke="#16168c" stroke-width="2" fill="none"/><path d="M9.4 9.4H11M8.6 12H10.4" stroke="#16168c" stroke-width="1.1"/></svg><span class="c" style="left:140px">14069</span><span class="c" style="left:244px">14069-2080</span><span class="c" style="left:426px">BREATHER</span><span class="c" style="left:595px">1</span></div>
<div class="row" style="top:719px;background:#ffffff"><svg class="bk" viewBox="0 0 17 16"><path d="M0.4 5L6.8 0.2V3.2C12.6 3.4 15.9 7.6 15.4 15L12.8 15.4C13 10.8 11 8 6.8 7.7V10.6Z" fill="#0c0c0c"/></svg><svg class="ic" viewBox="0 0 14 17"><rect x="0.6" y="1" width="12.6" height="15" rx="1.6" fill="#fff" stroke="#111" stroke-width="1"/><path d="M13.4 3V15.2Q13.4 16.2 12.2 16.2H2" stroke="#111" stroke-width="1.3" fill="none"/><path d="M1.6 1.4H12.6" stroke="#222" stroke-width="1.5" stroke-dasharray="1 1.05"/><path d="M2.6 5.8H8.2M2.6 8.4H6.6M2.6 11H5" stroke="#16168c" stroke-width="1.5"/><path d="M5.4 9.6L7.2 12.8L11.8 4.6" stroke="#16168c" stroke-width="2" fill="none"/><path d="M9.4 9.4H11M8.6 12H10.4" stroke="#16168c" stroke-width="1.1"/></svg><span class="c" style="left:140px"></span><span class="c" style="left:244px"></span><span class="c" style="left:426px"></span><span class="c" style="left:595px"></span></div>

</body></html>
